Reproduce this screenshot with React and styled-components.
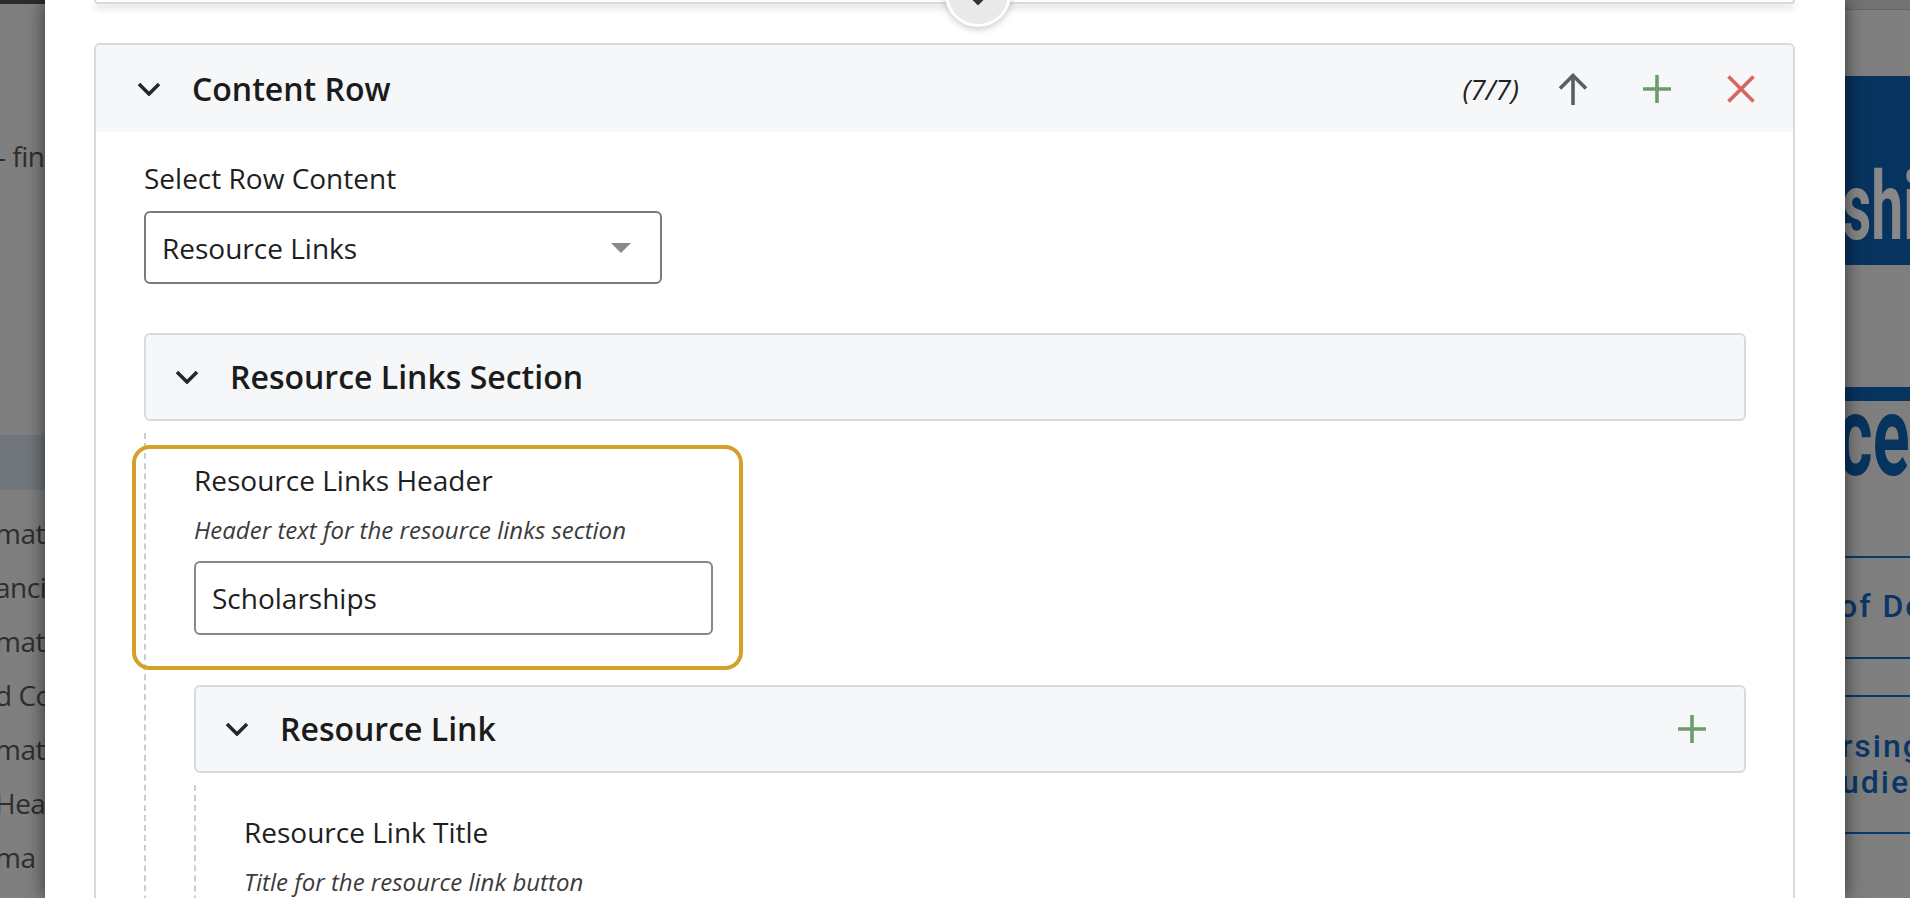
import React from "react";
import styled, { createGlobalStyle } from "styled-components";

const GlobalStyle = createGlobalStyle`
  html, body { margin: 0; padding: 0; height: 100%; overflow: hidden; }
  body { font-family: "Open Sans", "Noto Sans", sans-serif; background: #7f7f7f; }
  #root { height: 100%; }
  *, *::before, *::after { box-sizing: border-box; }
`;

const Screen = styled.div`
  display: flex;
  height: 100vh;
  overflow: hidden;
  background: #7f7f7f;
`;

/* ---------- dimmed page behind the modal ---------- */
const LeftBackdrop = styled.aside`
  flex: 0 0 45px;
  overflow: hidden;
  border-top: 4px solid #2c2c2c;
  display: flex;
  flex-direction: column;
`;

const BackdropLine = styled.div`
  flex: none;
  height: 54px;
  line-height: 54px;
  font-size: 28px;
  letter-spacing: -0.5px;
  color: #2e2e2e;
  white-space: nowrap;
  margin-top: ${(p) => p.$gap || 0}px;
  margin-left: ${(p) => p.$shift || 0}px;
`;

const BackdropBand = styled.div`
  flex: none;
  height: 55px;
  margin-top: ${(p) => p.$gap}px;
  background: #70767b;
`;

const RightBackdrop = styled.aside`
  flex: 0 0 65px;
  overflow: hidden;
  display: flex;
  flex-direction: column;
`;

const PageTopBar = styled.div`
  flex: none;
  height: 10px;
  background: #737373;
  border-bottom: 1px solid #676767;
`;

const PageBanner = styled.div`
  flex: none;
  margin-top: 66px;
  height: 189px;
  background: #07335f;
  padding-top: 83px;
  overflow: hidden;
`;

const CondensedText = styled.span`
  display: inline-block;
  white-space: nowrap;
  font-family: Roboto, "Liberation Sans", sans-serif;
  font-weight: 700;
  font-size: ${(p) => p.$size}px;
  line-height: ${(p) => p.$lh}px;
  color: ${(p) => p.$color};
  transform: scaleX(0.6);
  transform-origin: left center;
  margin-left: ${(p) => p.$shift}px;
`;

const PageBlueBar = styled.div`
  flex: none;
  margin-top: 122px;
  height: 14px;
  background: #07335f;
`;

const PageHeading = styled.div`
  flex: none;
  height: 70px;
  overflow: visible;
`;

const PageRule = styled.div`
  flex: none;
  height: 2px;
  margin-top: ${(p) => p.$gap}px;
  background: #0a3a6b;
`;

const PageLinkText = styled.div`
  flex: none;
  margin-top: ${(p) => p.$gap}px;
  margin-left: ${(p) => p.$shift}px;
  font-family: Roboto, "Liberation Sans", sans-serif;
  font-weight: 500;
  font-size: 32px;
  line-height: ${(p) => p.$lh}px;
  letter-spacing: 2px;
  color: #0b3766;
  white-space: nowrap;
`;

/* ---------- modal ---------- */
const Modal = styled.main`
  flex: 1 1 auto;
  position: relative;
  z-index: 1;
  background: #fff;
  box-shadow: 0 0 18px rgba(0, 0, 0, 0.6);
  padding: 0 50px 0 49px;
  overflow: hidden;
`;

const PrevCard = styled.div`
  position: relative;
  height: 4px;
  background: #fff;
  border: 2px solid #d5dce0;
  border-top: none;
  border-radius: 0 0 6px 6px;
  box-shadow: 0 4px 7px rgba(0, 0, 0, 0.16);
`;

const InsertKnob = styled.button`
  position: absolute;
  left: 849px;
  bottom: -25px;
  width: 66px;
  height: 66px;
  padding: 0;
  border-radius: 50%;
  border: 3px solid #fff;
  background: #e8e9eb;
  box-shadow: 0 2px 7px rgba(0, 0, 0, 0.22);
  svg {
    position: absolute;
    left: 18px;
    top: 27px;
  }
`;

const Card = styled.section`
  margin-top: 39px;
  border: 2px solid #d5dce0;
  border-radius: 6px;
  background: #fff;
  overflow: hidden;
`;

const AccordionBar = styled.div`
  display: flex;
  align-items: center;
  height: ${(p) => (p.$nested ? 88 : 87)}px;
  padding: 0 10px 0 ${(p) => (p.$nested ? 29 : 41)}px;
  background: #f5f7f8;
  border: ${(p) => (p.$nested ? "2px solid #d5dce0" : "none")};
  border-radius: ${(p) => (p.$nested ? "6px" : "0")};
  margin-top: ${(p) => p.$gap || 0}px;
`;

const BarTitle = styled.h2`
  flex: 1;
  margin: 0 0 0 31px;
  font-size: 32px;
  line-height: 44px;
  font-weight: 600;
  color: #1b1b1b;
`;

const Count = styled.span`
  margin-right: 12px;
  font-size: 28px;
  font-style: italic;
  color: #222;
`;

const ActionButton = styled.button`
  width: 84px;
  height: 56px;
  display: flex;
  align-items: center;
  justify-content: center;
  padding: 0;
  border: none;
  background: none;
  cursor: pointer;
`;

const CardBody = styled.div`
  padding: 25px 47px 0 48px;
`;

const FieldLabel = styled.label`
  display: block;
  font-size: 28px;
  line-height: 42px;
  color: #1e1e1e;
`;

const SelectBox = styled.div`
  margin-top: 12px;
  width: 518px;
  height: 73px;
  display: flex;
  align-items: center;
  justify-content: space-between;
  padding: 0 29px 0 16px;
  border: 2px solid #7b7b7b;
  border-radius: 6px;
  font-size: 28px;
  color: #1e1e1e;
`;

const NestedBody = styled.div`
  margin-top: 12px;
  padding: 12px 0 0 48px;
  border-left: 2px dashed #c8ced2;
`;

const FieldBox = styled.div`
  width: fit-content;
  margin-left: -62px;
  padding: 10px 26px 31px 58px;
  border: 4px solid ${(p) => (p.$focused ? "#d4a02a" : "transparent")};
  border-radius: 18px;
`;

const HelpText = styled.div`
  margin-top: 11px;
  font-size: 24px;
  line-height: 36px;
  font-style: italic;
  color: #3b3b3b;
`;

const TextInput = styled.input`
  display: block;
  margin-top: 13px;
  width: 519px;
  height: 74px;
  padding: 0 16px;
  border: 2px solid #86868b;
  border-radius: 6px;
  font-family: "Open Sans", "Noto Sans", sans-serif;
  font-size: 28px;
  color: #1e1e1e;
  background: #fff;
  outline: none;
`;

/* ---------- icons ---------- */
const Chevron = ({ color = "#23272b" }) => (
  <svg width="24" height="14" viewBox="0 0 24 14" fill="none">
    <path d="M2 2 L12 12 L22 2" stroke={color} strokeWidth="3.5" strokeLinejoin="miter" />
  </svg>
);

const ArrowUp = () => (
  <svg width="30" height="32" viewBox="0 0 30 32" fill="none">
    <path d="M15 32 V3" stroke="#5a5f66" strokeWidth="3.6" />
    <path d="M2 15.5 L15 2.5 L28 15.5" stroke="#5a5f66" strokeWidth="3.6" strokeLinejoin="miter" />
  </svg>
);

const PlusIcon = () => (
  <svg width="28" height="28" viewBox="0 0 28 28" fill="none">
    <path d="M14 0 V28 M0 14 H28" stroke="#6b9c6b" strokeWidth="3.6" />
  </svg>
);

const CloseIcon = () => (
  <svg width="28" height="28" viewBox="0 0 28 28" fill="none">
    <path d="M1.5 1.5 L26.5 26.5 M26.5 1.5 L1.5 26.5" stroke="#da6462" strokeWidth="3.6" />
  </svg>
);

const Caret = () => (
  <svg width="20" height="10" viewBox="0 0 20 10">
    <polygon points="0,0 20,0 10,10" fill="#8a8a8a" />
  </svg>
);

const leftLines = ["mate", "anci", "mat", "d Co", "mate", "Heal", "ma"];

export default function App() {
  return (
    <>
      <GlobalStyle />
      <Screen>
        <LeftBackdrop>
          <BackdropLine $gap={125} $shift={-3}>- fin</BackdropLine>
          <BackdropBand $gap={252} />
          {leftLines.map((t, i) => (
            <BackdropLine key={i} $gap={i === 0 ? 16 : 0} $shift={-5}>
              {t}
            </BackdropLine>
          ))}
        </LeftBackdrop>

        <Modal>
          <PrevCard>
            <InsertKnob aria-label="Insert">
              <Chevron color="#333" />
            </InsertKnob>
          </PrevCard>

          <Card>
            <AccordionBar>
              <Chevron />
              <BarTitle>Content Row</BarTitle>
              <Count>(7/7)</Count>
              <ActionButton aria-label="Move up">
                <ArrowUp />
              </ActionButton>
              <ActionButton aria-label="Add">
                <PlusIcon />
              </ActionButton>
              <ActionButton aria-label="Remove">
                <CloseIcon />
              </ActionButton>
            </AccordionBar>

            <CardBody>
              <FieldLabel>Select Row Content</FieldLabel>
              <SelectBox role="combobox">
                <span>Resource Links</span>
                <Caret />
              </SelectBox>

              <AccordionBar $nested $gap={49}>
                <Chevron />
                <BarTitle>Resource Links Section</BarTitle>
              </AccordionBar>

              <NestedBody>
                <FieldBox $focused>
                  <FieldLabel>Resource Links Header</FieldLabel>
                  <HelpText>Header text for the resource links section</HelpText>
                  <TextInput value="Scholarships" readOnly />
                </FieldBox>

                <AccordionBar $nested $gap={15}>
                  <Chevron />
                  <BarTitle>Resource Link</BarTitle>
                  <ActionButton aria-label="Add resource link">
                    <PlusIcon />
                  </ActionButton>
                </AccordionBar>

                <NestedBody>
                  <FieldBox>
                    <FieldLabel>Resource Link Title</FieldLabel>
                    <HelpText>Title for the resource link button</HelpText>
                    <TextInput value="" readOnly />
                  </FieldBox>
                </NestedBody>
              </NestedBody>
            </CardBody>
          </Card>
        </Modal>

        <RightBackdrop>
          <PageTopBar />
          <PageBanner>
            <CondensedText $size={95} $lh={95} $color="#888888" $shift={-3}>
              ships
            </CondensedText>
          </PageBanner>
          <PageBlueBar />
          <PageHeading>
            <CondensedText $size={114} $lh={70} $color="#07335f" $shift={-8}>
              ces
            </CondensedText>
          </PageHeading>
          <PageRule $gap={85} />
          <PageLinkText $gap={28} $lh={40} $shift={-6}>of Dev</PageLinkText>
          <PageRule $gap={31} />
          <PageRule $gap={36} />
          <PageLinkText $gap={31} $lh={36} $shift={-4}>
            rsing
            <br />
            udies
          </PageLinkText>
          <PageRule $gap={32} />
        </RightBackdrop>
      </Screen>
    </>
  );
}
